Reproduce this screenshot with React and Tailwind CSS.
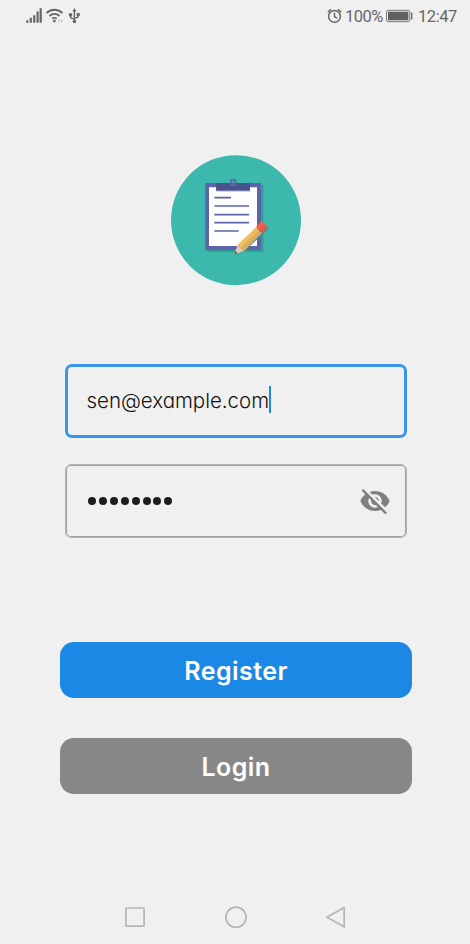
function StatusBar() {
  return (
    <header className="flex h-8 items-center justify-between pl-[26px] pr-[14px] text-[#666]">
      <svg width="56" height="32" viewBox="0 0 56 32" fill="none" stroke="#666">
        <path d="M1.3 22.8v-2.5M4.8 22.8v-5M8.2 22.8v-7.5M11.6 22.8V11.5M14.7 22.8V8.3" strokeWidth="2.2" />
        <path d="M20.5 13.2C25 8.6 32 8.6 36.5 13.2M23.5 16c2.9-2.9 7.1-2.9 10 0" strokeWidth="1.9" />
        <path d="M26 18.6q2.3-1.8 4.8 0" strokeWidth="1.5" />
        <circle cx="28.4" cy="21" r="1.4" fill="#666" stroke="none" />
        <path d="M32 20.7l1.7-1.7v3.4zM36.8 20.7l-1.7-1.7v3.4z" fill="#bbb" stroke="none" />
        <path d="M48.4 11v10M44.6 15v2q0 1 1 1.2l2.8 1M52.2 14.5v1.8q0 1-1 1.2l-2.8.9" strokeWidth="1.4" />
        <path d="M48.4 8l2 3.6h-4zM42.9 13.2h3.2v3h-3.2zM50.7 13h3v3h-3z" fill="#666" stroke="none" />
        <circle cx="48.4" cy="21.5" r="1.8" fill="#666" stroke="none" />
      </svg>
      <div className="flex h-8 items-center font-[Roboto,sans-serif] text-[16.5px] leading-8">
        <svg className="mr-[2px]" width="16" height="32" viewBox="0 0 16 32" fill="none" stroke="#666" strokeWidth="1.5">
          <circle cx="7.5" cy="16.4" r="5.9" />
          <path d="M7.5 12.8v3.8l2.7 1.8M.8 12.2l3.200-2.800M14.200 12.200l-3.200-2.800" />
        </svg>
        <span className="w-[38px] whitespace-nowrap pt-px tracking-[-0.55px]">100%</span>
        <svg className="ml-[3px] mr-[5px]" width="27" height="32" viewBox="0 0 27 32">
          <rect x="0.6" y="10.3" width="23.2" height="11.4" rx="1.5" fill="none" stroke="#777" />
          <rect x="2" y="11.7" width="20.4" height="8.6" fill="#606060" />
          <rect x="24.9" y="12.5" width="1.6" height="7" fill="#777" />
        </svg>
        <span className="w-[38px] whitespace-nowrap pt-px tracking-[-0.45px]">12:47</span>
      </div>
    </header>
  );
}

function Logo() {
  return (
    <svg className="ml-[165px] mt-[118px] shrink-0" width="142" height="142" viewBox="0 0 426 426">
      <circle cx="213" cy="210.500" r="195" fill="#3db8ad" />
      <path d="M127 105h168v201H127z" fill="#349c94" />
      <path d="M121 99h167v201H121z" fill="#5b64a8" />
      <path d="M132 112h144v176H132z" fill="#fff" />
      <path d="M155 122h103v3H155z" fill="#c5c6da" />
      <path d="M153 99h102v23H153z" fill="#49528f" />
      <path d="M198 107V90h13v17" fill="none" stroke="#5b64a8" strokeWidth="5" />
      <path d="M196 98h17v10h-17z" fill="#5b64a8" />
      <path d="M148 143h50M148 168h104M148 194h104M148 218h104M148 243h73" stroke="#5b64a8" strokeWidth="5" />
      <path d="M213 316l22-10 77-70-9-8z" fill="#349c94" />
      <path d="M207 314l11-29 19 18z" fill="#dfcabb" />
      <path d="M207 314l4-11 7 6z" fill="#55615f" />
      <path d="M217 286l56-54 17 17-54 55z" fill="#efbd5b" />
      <path d="M226 295l54-53 9 8-53 54z" fill="#d9ad63" />
      <path d="M273 231l17-18 18 18-18 19z" fill="#f3614e" />
      <path d="M281 240l18-18 9 9-18 19z" fill="#dc5b4e" />
    </svg>
  );
}

function HiddenEye() {
  return (
    <svg width="32" height="32" viewBox="0 0 24 24" fill="#808080">
      <path d="M12 7c2.760 0 5 2.240 5 5 0 .65-.13 1.260-.36 1.830l2.920 2.920c1.510-1.260 2.700-2.890 3.430-4.750-1.730-4.390-6-7.500-11-7.500-1.400 0-2.740.25-3.980.7l2.160 2.160C10.740 7.130 11.350 7 12 7zM2 4.270l2.280 2.280.46.46C3.080 8.300 1.780 10.020 1 12c1.730 4.390 6 7.500 11 7.500 1.550 0 3.030-.3 4.380-.84l.42.42L19.730 22 21 20.730 3.270 3 2 4.270zM7.530 9.800l1.550 1.550c-.05.21-.08.43-.08.65 0 1.660 1.340 3 3 3 .22 0 .44-.03.65-.08l1.550 1.550c-.67.33-1.410.53-2.200.53-2.760 0-5-2.240-5-5 0-.79.2-1.530.53-2.200zm4.310-.78l3.150 3.150.02-.16c0-1.660-1.340-3-3-3l-.17.01z" />
    </svg>
  );
}

function NavigationBar() {
  return (
    <nav className="mt-auto flex h-[54px] shrink-0 items-center justify-between pl-[124px] pr-[124px]">
      <svg width="22" height="22" viewBox="0 0 22 22" fill="none" stroke="#b5b5b5" strokeWidth="1.7">
        <rect x="1.9" y="2" width="18.200" height="18.200" rx="0.8" />
      </svg>
      <svg width="24" height="24" viewBox="0 0 24 24" fill="none" stroke="#b5b5b5" strokeWidth="1.7">
        <circle cx="13" cy="12.300" r="10.100" />
      </svg>
      <svg width="22" height="24" viewBox="0 0 22 24" fill="none" stroke="#b5b5b5" strokeWidth="1.7" strokeLinejoin="round">
        <path d="M20.200 2.600v19.200L3 12.300z" />
      </svg>
    </nav>
  );
}

export default function App() {
  return (
    <main className="flex h-[944px] w-[470px] flex-col overflow-hidden bg-[#f0f0f0]">
      <StatusBar />
      <Logo />
      <div className="ml-[65px] mt-[72px] flex h-[74px] w-[342px] shrink-0 items-center rounded-[7px] border-[3px] border-[#3995e9] pl-[18.500px]">
        <span className="w-[182px] whitespace-nowrap pb-px font-[Inter,sans-serif] text-[20.500px] font-light leading-7 tracking-[-0.02px] text-[#111] [font-feature-settings:'cv11']">sen@example.com</span>
        <span className="mb-[3px] ml-[0.500px] h-[27px] w-[2px] bg-[#1e88e5]" />
      </div>
      <div className="ml-[65px] mt-[26px] flex h-[74px] w-[342px] shrink-0 items-center justify-between rounded-[6px] border border-[#b5b5b5] shadow-[inset_0_0_0_1px_#a0a0a0] pl-[22px] pr-[15px]">
        <div className="flex gap-[2.920px]" aria-label="Password">
          {Array.from({ length: 8 }, (_, i) => (
            <span key={i} className="size-[8px] rounded-full bg-[#1d1d1d]" />
          ))}
        </div>
        <HiddenEye />
      </div>
      <button className="ml-[60px] mt-[104px] flex h-[56px] w-[352px] shrink-0 items-center justify-center rounded-[14px] bg-[#1b88e6] pt-[3px] font-[Inter,sans-serif] text-[25px] font-semibold tracking-[0.450px] text-white">Register</button>
      <button className="ml-[60px] mt-[40px] flex h-[56px] w-[352px] shrink-0 items-center justify-center rounded-[14px] bg-[#878787] pt-[3px] font-[Inter,sans-serif] text-[25px] font-semibold tracking-[0.450px] text-white">Login</button>
      <NavigationBar />
    </main>
  );
}
